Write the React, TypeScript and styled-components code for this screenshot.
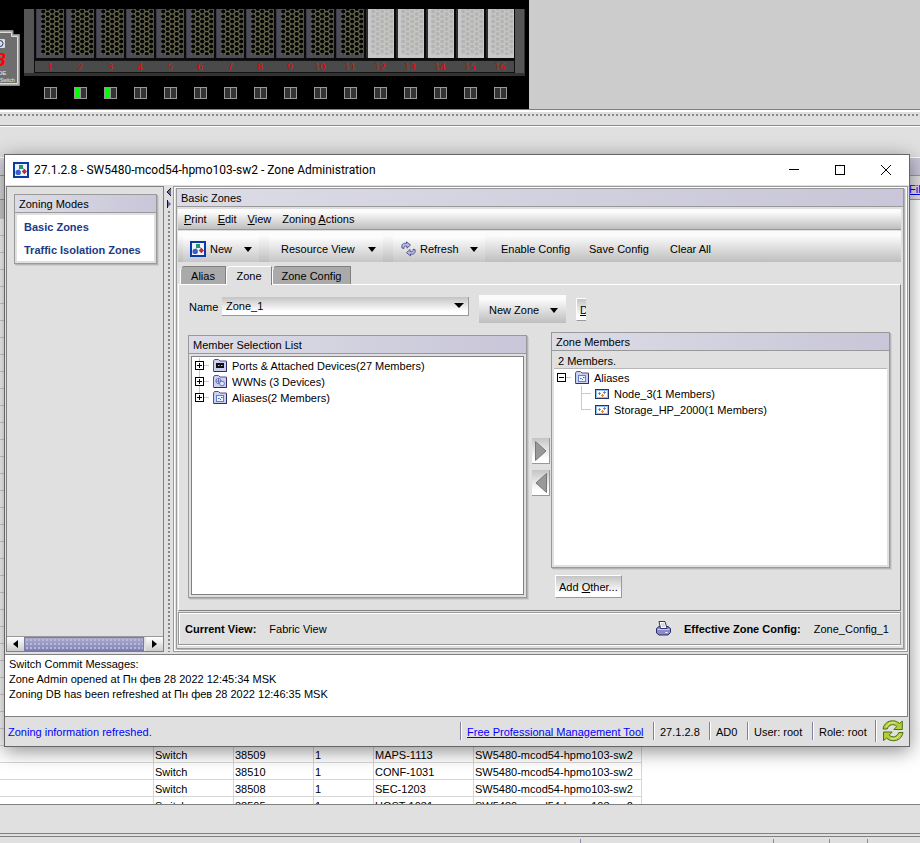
import React from "react";
import styled, { createGlobalStyle, css } from "styled-components";

const GREY = "#e0e0e0";
const LINE = "#999999";
const DARK = "#808080";
const headerFill = "linear-gradient(to right, #dcdce6, #c8c6d8)";
const barFill = "linear-gradient(to bottom, #fbfbfb 15%, #bebebe)";

const Global = createGlobalStyle`
  * { box-sizing: border-box; }
  body { margin: 0; background: ${GREY}; color: #000; font: 11px/16px "Liberation Sans", Arial, sans-serif; overflow: hidden; }
  button, select { font: inherit; color: inherit; margin: 0; padding: 0; border: 0; background: none; border-radius: 0; }
  svg { display: block; flex: none; }
  ul { list-style: none; margin: 0; padding: 0; }
`;

/* ---------- background application ---------- */

const Desktop = styled.div`
  position: relative;
  min-height: 100vh;
  overflow: hidden;
  display: flex;
  flex-direction: column;
`;

const ChassisStrip = styled.div`
  display: flex;
  background: #cccccc;
`;

const Chassis = styled.div`
  display: flex;
  align-items: flex-start;
  background: #000;
  height: 109px;
  padding: 9px 4px 0 0;
`;

const Badge = styled.div`
  width: 24px;
  padding-top: 21px;
`;

const Rack = styled.div`
  width: 501px;
`;

const Frame = styled.div`
  background: #555;
  border-right: 1px solid #333;
  border-bottom: 3px solid #333;
  padding: 0 9px 0 10px;
`;

const Bays = styled.div`
  display: grid;
  grid-template-columns: repeat(16, 30px);
  background: #0a0a0a;
  padding-bottom: 2px;
`;

const Labels = styled.div`
  display: grid;
  grid-template-columns: repeat(16, 30px);
  height: 13px;
  background: #4a4a4a;
  border: 1px solid #111;
  color: #f00;
  font: 9px/12px "DejaVu Sans", sans-serif;
  text-align: center;
`;

const Leds = styled.div`
  display: grid;
  grid-template-columns: repeat(16, 30px);
  justify-items: center;
  padding: 11px 0 0 11px;
`;

const Led = styled.div<{ $on?: boolean }>`
  display: flex;
  gap: 1px;
  padding: 1px;
  background: #999;
  &::before, &::after { content: ""; width: 5px; height: 10px; background: #333; }
  &::before { background: ${(p) => (p.$on ? "#00ff00" : "#333")}; }
`;

const Grip = styled.div`
  height: 17px;
  border-top: 1px solid ${DARK};
  border-bottom: 1px solid #8888a0;
  background: radial-gradient(circle at 1px 1px, #8a8a8a 1px, transparent 1px) 0 4px / 4px 100% repeat-x, ${GREY};
  box-shadow: inset 0 2px #fff, 0 1px #fff;
`;

const Spacer = styled.div`
  height: 31px;
`;

const LogTitle = styled.div`
  height: 19px;
  border-top: 1px solid #fff;
  border-bottom: 1px solid ${LINE};
  background: ${headerFill};
`;

const LogTools = styled.div`
  height: 24px;
  display: flex;
  justify-content: flex-end;
  padding: 5px 0 0;
  border-bottom: 1px solid ${LINE};
  overflow: hidden;
`;

const FilterClip = styled.div`
  width: 11px;
  overflow: hidden;
  white-space: nowrap;
`;

const Link = styled.a`
  color: #0000ff;
  text-decoration: underline;
`;

const LogBody = styled.div`
  background: #fff;
  height: 605px;
  border-bottom: 1px solid ${DARK};
  overflow: hidden;
`;

const LogTable = styled.table`
  width: 642px;
  table-layout: fixed;
  border-collapse: separate;
  border-spacing: 0;
  th, td {
    height: 17px;
    padding: 2px 0 0 1px;
    border-right: 1px solid #d6d6d6;
    border-bottom: 1px solid #d6d6d6;
    line-height: 14px;
    text-align: left;
    font-weight: normal;
    white-space: nowrap;
  }
  th { height: 19px; background: #d2d2d2; }
`;

const PageFooter = styled.div`
  margin-top: 28px;
  height: 10px;
  border-top: 1px solid ${DARK};
  padding-top: 2px;
`;

const FooterCells = styled.div`
  border-top: 1px solid ${DARK};
  display: grid;
  grid-template-columns: 581px 193px 56px 38px 1fr;
  padding-top: 2px;
  span { height: 5px; border-right: 1px solid #8888a8; }
  span:last-child { border: 0; }
`;

/* ---------- window ---------- */

const Window = styled.section`
  position: absolute;
  left: 4px;
  right: 10px;
  top: 154px;
  border: 1px solid #666;
  background: ${GREY};
  box-shadow: 0 4px 18px rgba(0, 0, 0, 0.45);
`;

const TitleBar = styled.header`
  display: flex;
  align-items: center;
  height: 30px;
  padding-left: 8px;
  background: #fff;
  font: 12px/16px Roboto, "Open Sans", sans-serif;
`;

const TitleText = styled.h1`
  flex: 1;
  margin: 0 0 0 5px;
  font: inherit;
  white-space: nowrap;
`;

const WinButton = styled.button`
  width: 46px;
  height: 30px;
  display: grid;
  place-items: center;
`;

const Main = styled.div`
  display: flex;
  padding: 1px 1px 2px;
`;

const SidePane = styled.aside`
  width: 158px;
  display: flex;
  flex-direction: column;
  justify-content: space-between;
  border: 1px solid ${DARK};
  padding-top: 7px;
`;

const Card = styled.section`
  border: 1px solid ${LINE};
  box-shadow: 1px 1px #b4b4b4, 2px 2px #cfcfcf;
`;

const CardTitle = styled.h2`
  margin: 0;
  height: 18px;
  padding-left: 4px;
  font: inherit;
  line-height: 18px;
  background: ${headerFill};
  border-bottom: 1px solid ${LINE};
`;

const ModesCard = styled(Card)`
  margin: 0 6px 0 7px;
`;

const ModeList = styled.nav`
  display: flex;
  flex-direction: column;
  gap: 7px;
  margin: 2px;
  padding: 4px 7px 3px;
  background: #fff;
  a { color: #1b3a86; font-weight: bold; text-decoration: none; white-space: nowrap; }
`;

const HScroll = styled.div`
  display: flex;
  height: 15px;
  border-top: 1px solid ${LINE};
`;

const ScrollButton = styled.button`
  width: 17px;
  display: grid;
  place-items: center;
  background: linear-gradient(#fff, #ccc);
`;

const Thumb = styled.div`
  flex: 1;
  margin-right: 2px;
  border: 1px solid #7a7aa8;
  background:
    radial-gradient(circle, #b8b8dc 1px, transparent 1px) 0 0 / 4px 4px,
    linear-gradient(#a9a9cf, #8585b3);
`;

const Splitter = styled.div`
  width: 9px;
  padding: 2px 0 0 3px;
  display: flex;
  flex-direction: column;
  gap: 3px;
`;

const SplitDots = styled.div`
  flex: 1;
  width: 4px;
  background: radial-gradient(circle at 2px 1px, #888 1px, transparent 1px) 0 0 / 4px 4px;
`;

const Outer = styled.main`
  flex: 1;
  min-width: 0;
  border: 1px solid ${LINE};
  box-shadow: inset 0 0 0 1px #fff;
  padding: 1px 3px 2px 2px;
`;

const Inner = styled(Card)`
  box-shadow: 1px 1px #b4b4b4;
  padding-bottom: 3px;
`;

const MenuBar = styled.nav`
  display: flex;
  gap: 11px;
  height: 21px;
  margin: 2px 2px 0 1px;
  padding: 0 6px;
  background: ${barFill};
  border-bottom: 1px solid ${LINE};
  button { line-height: 20px; }
  u { text-underline-offset: 1px; }
`;

const ToolBar = styled.div`
  display: flex;
  height: 31px;
  margin: 1px 2px 0 1px;
  padding-left: 5px;
  gap: 10px;
  background: ${barFill};
`;

const ToolButton = styled.button<{ $w: number; $pad: number }>`
  display: flex;
  align-items: center;
  width: ${(p) => p.$w}px;
  padding: 5px 7px 0 ${(p) => p.$pad}px;
  gap: 4px;
  white-space: nowrap;
  background: linear-gradient(to bottom, #fcfcfc 20%, #c6c6c6);
  span { flex: 1; text-align: left; }
`;

const FlatButton = styled.button<{ $w: number }>`
  width: ${(p) => p.$w}px;
  padding-top: 5px;
  text-align: left;
  white-space: nowrap;
`;

const FlatGroup = styled.div`
  display: flex;
  padding-left: 6px;
`;

const Tabs = styled.div`
  display: flex;
  align-items: flex-end;
  padding: 4px 0 0 3px;
`;

const Tab = styled.button<{ $on?: boolean; $w: number }>`
  width: ${(p) => p.$w}px;
  height: 18px;
  line-height: 18px;
  border: 1px solid ${DARK};
  border-left-color: #fff;
  border-bottom: 0;
  border-top-left-radius: 5px;
  background: #aaa;
  ${(p) =>
    p.$on &&
    css`
      background: ${GREY};
      border-top-color: #fff;
      height: 19px;
      margin-bottom: -1px;
    `}
`;

const TabPanel = styled.div`
  margin: 0 2px 0 1px;
  padding: 10px 10px 0 9px;
  height: 327px;
  border: 1px solid ${DARK};
  border-top-color: #fff;
  border-left-color: #fff;
`;

const FormRow = styled.div`
  display: flex;
  align-items: flex-start;
  gap: 10px;
`;

const NameField = styled.label`
  display: grid;
  grid-template-columns: 33px 247px;
  align-items: center;
  padding: 2px 0 0 1px;
`;

const SelectBox = styled.div`
  position: relative;
  svg { position: absolute; right: 5px; top: 6px; pointer-events: none; }
`;

const Select = styled.select`
  appearance: none;
  width: 100%;
  height: 19px;
  padding-left: 4px;
  background: linear-gradient(#c4c4c4, #fff 80%);
  border-right: 1px solid ${LINE};
  border-bottom: 1px solid ${LINE};
`;

const NewZone = styled.button`
  display: flex;
  align-items: center;
  gap: 11px;
  width: 87px;
  height: 28px;
  padding: 2px 7px 0 10px;
  white-space: nowrap;
  background: ${barFill};
`;

const PlainButton = styled.button`
  padding: 0 3px;
  height: 23px;
  white-space: nowrap;
  overflow: hidden;
  background: linear-gradient(#c4c4c4, #fff 80%);
  border: 1px solid ${LINE};
  border-top-color: #fff;
  border-left-color: #fff;
`;

const ClippedButton = styled(PlainButton)`
  width: 10px;
  margin-top: 3px;
  border-right: 0;
  text-align: left;
`;

const Columns = styled.div`
  display: grid;
  grid-template-columns: 1fr 24px 1fr;
  margin-top: 9px;
`;

const LeftCard = styled(Card)`
  margin-top: 3px;
  height: 263px;
  display: flex;
  flex-direction: column;
`;

const ListBox = styled.div`
  flex: 1;
  margin: 2px;
  padding: 1px 0 0 3px;
  background: #fff;
  border: 1px solid ${DARK};
`;

const MemberCard = styled(Card)`
  height: 236px;
  display: flex;
  flex-direction: column;
`;

const Count = styled.p`
  margin: 1px 2px 0;
  height: 17px;
  padding-left: 4px;
  line-height: 18px;
  border-bottom: 1px solid #b8b8b8;
`;

const MemberBox = styled.div`
  flex: 1;
  margin: 0 2px 2px;
  padding: 1px 0 0 3px;
  background: #fff;
`;

const Node = styled.li`
  display: flex;
  align-items: center;
  height: 16px;
  white-space: nowrap;
  svg + span { margin-left: 5px; }
`;

const Arrows = styled.div`
  display: flex;
  flex-direction: column;
  align-items: flex-end;
  gap: 6px;
  padding: 106px 1px 0 0;
`;

const ArrowButton = styled.button`
  width: 18px;
  height: 26px;
  display: grid;
  place-items: center;
  background: linear-gradient(#c4c4c4, #fff 80%);
  border-right: 1px solid ${LINE};
  border-bottom: 1px solid ${LINE};
`;

const AddRow = styled.div`
  padding: 7px 0 0 4px;
`;

const ViewBar = styled.div`
  display: flex;
  align-items: center;
  height: 33px;
  margin: 1px 2px 0 1px;
  padding: 0 11px 0 6px;
  border: 1px solid ${LINE};
  box-shadow: inset 1px 1px #fff, 0 1px #fff;
  white-space: nowrap;
  b + span { margin-left: 13px; }
  svg { margin: 0 13px 0 auto; }
`;

const Messages = styled.div`
  height: 63px;
  margin-right: 1px;
  padding: 2px 4px;
  background: #fff;
  border: 1px solid ${DARK};
  border-left: 0;
  line-height: 15px;
  p { margin: 0; }
`;

const StatusBar = styled.footer`
  display: flex;
  align-items: center;
  height: 29px;
  padding: 0 0 2px 3px;
  white-space: nowrap;
`;

const Info = styled.span`
  flex: 1;
  color: #0000ff;
  padding-top: 3px;
`;

const Cell = styled.div<{ $w: number }>`
  width: ${(p) => p.$w}px;
  height: 18px;
  padding: 2px 0 0 6px;
  border-left: 1px solid #7f7fa6;
  box-shadow: inset 1px 0 #fff;
`;

const IconCell = styled(Cell)`
  height: 22px;
  padding-top: 0;
`;

/* ---------- icons ---------- */

const AppIcon = () => (
  <svg width="16" height="16" viewBox="0 0 16 16">
    <rect x="1" y="1" width="14" height="14" fill="#eef3ff" stroke="#0b3aa8" strokeWidth="2" />
    <path d="M7.500 6 5 9M10 6l2 3" stroke="#9aa4b8" />
    <rect x="6" y="3" width="4" height="4" fill="#1c9a6c" />
    <circle cx="5.200" cy="10.400" r="2.700" fill="#3b5fc4" />
    <path d="m11.400 6.800 2.600 2.700-2.600 2.700L8.800 9.500z" fill="#c62a2a" />
  </svg>
);

const Caret = ({ w = 8 }: { w?: number }) => (
  <svg width={w} height="5" viewBox="0 0 8 5" preserveAspectRatio="none">
    <path d="M0 0h8L4 5z" />
  </svg>
);

const RefreshSmall = () => (
  <svg width="15" height="16" viewBox="0 0 15 16" stroke="#3c3c78" strokeWidth=".8" fill="#b7b9ea">
    <path d="M1 7C0 3.500 2.500 1.500 5.500 2.500V.8L9.500 4 6 7.200V5.300C4 4.600 2.800 5.200 3 7.500z" />
    <path d="M14 8.500c1 3.500-1.500 5.500-4.500 4.500v1.900l-4-3.200 3.500-3.200v1.900c2 .7 3.200.1 3-2.100z" />
  </svg>
);

const Expander = ({ open, last }: { open?: boolean; last?: boolean }) => (
  <svg width="18" height="16" viewBox="0 0 18 16" shapeRendering="crispEdges">
    {!open && <path d={last ? "M4.500 0v4" : "M4.500 0v16"} stroke="#c8c8dc" />}
    <path d="M9 7.500h5" stroke="#c8c8dc" />
    <rect x=".5" y="3.500" width="8" height="8" fill="#fff" stroke="#000" />
    <path d={open ? "M2 7.500h5" : "M2 7.500h5M4.500 5v5"} stroke="#000" />
  </svg>
);

const Branch = ({ last }: { last?: boolean }) => (
  <svg width="38" height="16" viewBox="0 0 38 16" shapeRendering="crispEdges">
    <path d={`M24.500 0v${last ? 8 : 16}M24 7.500h10`} stroke="#c8c8dc" fill="none" />
  </svg>
);

const Folder = ({ kind }: { kind: "port" | "wwn" | "alias" }) => (
  <svg width="14" height="14" viewBox="0 0 14 14">
    <path d="M.5 12.500V2l1-1.500h4L7 2h6.500v10.500z" fill="#cfcff0" stroke="#50509a" />
    <path d="M1 12.500h12.500V3" fill="none" stroke="#2f2f66" />
    {kind === "port" && (
      <>
        <rect x="3" y="4" width="8" height="5" fill="#111" />
        <path d="M5 6.500h1.500M8 6.500h1.500" stroke="#ccc" />
      </>
    )}
    {kind === "wwn" && (
      <g fill="#e4e8fa" stroke="#4a5aa8" strokeWidth=".8">
        <circle cx="5.500" cy="6" r="2.600" />
        <circle cx="9" cy="8.500" r="2.400" />
        <path d="M3 6h5M5.500 3.500v5" />
      </g>
    )}
    {kind === "alias" && (
      <>
        <rect x="3.500" y="4.500" width="7" height="6" fill="#eaf3ff" stroke="#4f86d8" />
        <path d="M5 7.500h1.500M8 6.500h1.500M7 8.500h1" stroke="#3c62b0" />
      </>
    )}
  </svg>
);

const AliasIcon = () => (
  <svg width="14" height="11" viewBox="0 0 14 11">
    <rect x=".5" y=".5" width="13" height="9" fill="#fff" stroke="#26346e" />
    <rect x="1.500" y="1.500" width="11" height="7" fill="none" stroke="#8fc0f4" />
    <path d="M3 4.500h3M4.500 3v3M8 3.500h3M9.500 2v3" stroke="#5a6cc0" strokeWidth=".8" />
    <path d="M6 6.500h3M7.500 5v3" stroke="#e88a1a" />
  </svg>
);

const Printer = () => (
  <svg width="15" height="15" viewBox="0 0 15 15">
    <path d="M.5 7.500 3 5.500h9l2.500 2v4L12 14H3L.5 12z" fill="#8c8cc8" stroke="#2c2c66" />
    <path d="M1.500 8.500h12" stroke="#c4c4ec" />
    <path d="M4.500 7.500 3 .5h6l2 7z" fill="#fff" stroke="#33336e" />
    <path d="M5 3h3.500M5.500 5H9" stroke="#9a9ac8" strokeWidth=".8" />
    <path d="M9.500 11.500h2" stroke="#fff" />
  </svg>
);

const RefreshGreen = () => (
  <svg width="22" height="22" viewBox="0 0 22 22" fill="#b4cc3c" stroke="#4c7012" strokeWidth="1">
    <path d="M1 9C2 3.500 6 .8 10.500.8c3 0 5.300 1 6.800 2.700l3-2.300V9.500h-8.500L14.800 6.500C11.500 3.200 6.800 4.500 5.200 9z" />
    <path d="M21 12.500c-1 5.500-5 8.200-9.500 8.200-3 0-5.300-1-6.800-2.700l-3.200 2.500V12h8.700L7.200 15c3.300 3.300 8 2 9.600-2.500z" />
    <path d="M4 7C6 3.500 9.500 2 13.500 3" fill="none" stroke="#e6f08c" />
    <path d="M18 14.500c-2 3.500-5.500 5-9.500 4" fill="none" stroke="#e6f08c" />
  </svg>
);

const Blade = ({ empty }: { empty?: boolean }) => (
  <svg width="30" height="49" viewBox="0 0 30 49">
    <defs>
      <pattern id={empty ? "meshLight" : "meshDark"} x="7" y="0" width="9" height="5" patternUnits="userSpaceOnUse">
        <rect width="9" height="5" fill={empty ? "#c8c8c2" : "#66664c"} />
        <g fill={empty ? "#b4b4b6" : "#050505"}>
          <circle cx="2.200" cy="2.500" r="2.100" />
          <circle cx="6.700" cy="0" r="2.100" />
          <circle cx="6.700" cy="5" r="2.100" />
        </g>
      </pattern>
    </defs>
    <rect width="30" height="49" fill="#0a0a0a" />
    <rect x="2" width="28" height="49" fill={empty ? "#2c2c2c" : "#3c3c44"} />
    <rect x={empty ? 4 : 3} width={empty ? 26 : 27} height="49" fill={empty ? "#c8c8ca" : "#4c4c5a"} />
    <rect x="7" width="22" height="46" rx="1" fill={`url(#${empty ? "meshLight" : "meshDark"})`} />
  </svg>
);

const BadgeArt = () => (
  <svg width="20" height="56" viewBox="0 0 20 56">
    <path d="M-2 .5H13V4.500h6.500v51H-2z" fill="#aaa" stroke="#888" />
    <path d="M-2 2.500h13.500v4h6v47H-2z" fill="#6e6e6e" stroke="#ddd" />
    <rect x="-6" y="9" width="11" height="9" rx="1" fill="#ddd" />
    <circle cx="0" cy="13.500" r="3" fill="none" stroke="#2a3f7a" />
    <g fontFamily="Liberation Sans, Arial, sans-serif">
      <text x="-5" y="36" fontSize="19" fontWeight="bold" fontStyle="italic" fill="#ff0000">8</text>
      <text x="-2" y="45" fontSize="6" fill="#eee">DE</text>
      <text x="0" y="52" fontSize="5" fill="#eee">Switch</text>
    </g>
  </svg>
);

/* ---------- data ---------- */

const slots = Array.from({ length: 16 }, (_, i) => i + 1);
const emptyRows = Array.from({ length: 31 }, (_, i) => i);
const log = [
  ["Switch", "38509", "1", "MAPS-1113", "SW5480-mcod54-hpmo103-sw2"],
  ["Switch", "38510", "1", "CONF-1031", "SW5480-mcod54-hpmo103-sw2"],
  ["Switch", "38508", "1", "SEC-1203", "SW5480-mcod54-hpmo103-sw2"],
  ["Switch", "38505", "1", "HOST-1031", "SW5480-mcod54-hpmo103-sw2"],
];

const Background = () => (
  <>
    <ChassisStrip>
      <Chassis>
        <Badge><BadgeArt /></Badge>
        <Rack>
          <Frame>
            <Bays>{slots.map((n) => <Blade key={n} empty={n > 11} />)}</Bays>
            <Labels>{slots.map((n) => <span key={n}>{n}</span>)}</Labels>
          </Frame>
          <Leds>{slots.map((n) => <Led key={n} $on={n === 2 || n === 3} />)}</Leds>
        </Rack>
      </Chassis>
    </ChassisStrip>
    <Grip />
    <Spacer />
    <LogTitle />
    <LogTools>
      <FilterClip><Link href="#filter">Filter</Link></FilterClip>
    </LogTools>
    <LogBody>
      <LogTable>
        <colgroup>
          <col width="154" /><col width="80" /><col width="80" /><col width="60" /><col width="100" /><col width="168" />
        </colgroup>
        <thead>
          <tr><th /><th /><th /><th /><th /><th /></tr>
        </thead>
        <tbody>
          {emptyRows.map((r) => <tr key={r}><td /><td /><td /><td /><td /><td /></tr>)}
          {log.map((row) => (
            <tr key={row[1]}><td />{row.map((c, i) => <td key={i}>{c}</td>)}</tr>
          ))}
        </tbody>
      </LogTable>
    </LogBody>
    <PageFooter>
      <FooterCells><span /><span /><span /><span /><span /></FooterCells>
    </PageFooter>
  </>
);

export default function App() {
  return (
    <>
      <Global />
      <Desktop>
        <Background />
        <Window>
          <TitleBar>
            <AppIcon />
            <TitleText>27.1.2.8 - SW5480-mcod54-hpmo103-sw2 - Zone Administration</TitleText>
            <WinButton aria-label="Minimize">
              <svg width="10" height="10"><path d="M0 4.500h10" stroke="#000" /></svg>
            </WinButton>
            <WinButton aria-label="Maximize">
              <svg width="10" height="10"><rect x=".5" y=".5" width="9" height="9" fill="none" stroke="#000" /></svg>
            </WinButton>
            <WinButton aria-label="Close">
              <svg width="10" height="10"><path d="m0 0 10 10M10 0 0 10" stroke="#000" /></svg>
            </WinButton>
          </TitleBar>

          <Main>
            <SidePane>
              <ModesCard>
                <CardTitle>Zoning Modes</CardTitle>
                <ModeList>
                  <a href="#basic">Basic Zones</a>
                  <a href="#isolation">Traffic Isolation Zones</a>
                </ModeList>
              </ModesCard>
              <HScroll>
                <ScrollButton aria-label="Scroll left">
                  <svg width="5" height="8"><path d="M5 0v8L0 4z" /></svg>
                </ScrollButton>
                <Thumb />
                <ScrollButton aria-label="Scroll right">
                  <svg width="5" height="8"><path d="M0 0v8l5-4z" /></svg>
                </ScrollButton>
              </HScroll>
            </SidePane>

            <Splitter>
              <svg width="5" height="20">
                <path d="M4 0v8L0 4z" fill="#6a6a9c" />
                <path d="M4 0 0 4l4 4" fill="none" stroke="#111" />
                <path d="M0 12v8l4-4z" fill="#6a6a9c" />
                <path d="M.5 12v8" stroke="#111" />
              </svg>
              <SplitDots />
            </Splitter>

            <Outer>
              <Inner>
                <CardTitle>Basic Zones</CardTitle>
                <MenuBar>
                  <button><u>P</u>rint</button>
                  <button><u>E</u>dit</button>
                  <button><u>V</u>iew</button>
                  <button>Zoning <u>A</u>ctions</button>
                </MenuBar>
                <ToolBar>
                  <ToolButton $w={76} $pad={7}><AppIcon /><span>New</span><Caret /></ToolButton>
                  <ToolButton $w={114} $pad={12}><span>Resource View</span><Caret /></ToolButton>
                  <ToolButton $w={92} $pad={8}><RefreshSmall /><span>Refresh</span><Caret /></ToolButton>
                  <FlatGroup>
                    <FlatButton $w={88}>Enable Config</FlatButton>
                    <FlatButton $w={81}>Save Config</FlatButton>
                    <FlatButton $w={50}>Clear All</FlatButton>
                  </FlatGroup>
                </ToolBar>
                <Tabs role="tablist">
                  <Tab role="tab" $w={46}>Alias</Tab>
                  <Tab role="tab" aria-selected $on $w={46}>Zone</Tab>
                  <Tab role="tab" $w={79}>Zone Config</Tab>
                </Tabs>
                <TabPanel>
                  <FormRow>
                    <NameField>
                      Name
                      <SelectBox>
                        <Select defaultValue="Zone_1"><option>Zone_1</option></Select>
                        <Caret w={10} />
                      </SelectBox>
                    </NameField>
                    <NewZone>New Zone<Caret /></NewZone>
                    <ClippedButton aria-label="Delete"><u>D</u></ClippedButton>
                  </FormRow>
                  <Columns>
                    <LeftCard>
                      <CardTitle>Member Selection List</CardTitle>
                      <ListBox>
                        <ul>
                          <Node><Expander /><Folder kind="port" /><span>Ports &amp; Attached Devices(27 Members)</span></Node>
                          <Node><Expander /><Folder kind="wwn" /><span>WWNs (3 Devices)</span></Node>
                          <Node><Expander last /><Folder kind="alias" /><span>Aliases(2 Members)</span></Node>
                        </ul>
                      </ListBox>
                    </LeftCard>
                    <Arrows>
                      <ArrowButton aria-label="Add member">
                        <svg width="12" height="20"><path d="M.5.5v19L11 10z" fill="#999" stroke="#777" /></svg>
                      </ArrowButton>
                      <ArrowButton aria-label="Remove member">
                        <svg width="12" height="20"><path d="M11.500.5v19L1 10z" fill="#999" stroke="#777" /></svg>
                      </ArrowButton>
                    </Arrows>
                    <div>
                      <MemberCard>
                        <CardTitle>Zone Members</CardTitle>
                        <Count>2 Members.</Count>
                        <MemberBox>
                          <ul>
                            <Node><Expander open /><Folder kind="alias" /><span>Aliases</span></Node>
                            <Node><Branch /><AliasIcon /><span>Node_3(1 Members)</span></Node>
                            <Node><Branch last /><AliasIcon /><span>Storage_HP_2000(1 Members)</span></Node>
                          </ul>
                        </MemberBox>
                      </MemberCard>
                      <AddRow><PlainButton>Add <u>O</u>ther...</PlainButton></AddRow>
                    </div>
                  </Columns>
                </TabPanel>
                <ViewBar>
                  <b>Current View:</b><span>Fabric View</span>
                  <Printer />
                  <b>Effective Zone Config:</b><span>Zone_Config_1</span>
                </ViewBar>
              </Inner>
            </Outer>
          </Main>

          <Messages>
            <p>Switch Commit Messages:</p>
            <p>Zone Admin opened at Пн фев 28 2022 12:45:34 MSK</p>
            <p>Zoning DB has been refreshed at Пн фев 28 2022 12:46:35 MSK</p>
          </Messages>
          <StatusBar>
            <Info>Zoning information refreshed.</Info>
            <Cell $w={193}><Link href="#tool">Free Professional Management Tool</Link></Cell>
            <Cell $w={56}>27.1.2.8</Cell>
            <Cell $w={38}>AD0</Cell>
            <Cell $w={65}>User: root</Cell>
            <Cell $w={63}>Role: root</Cell>
            <IconCell $w={34}><RefreshGreen /></IconCell>
          </StatusBar>
        </Window>
      </Desktop>
    </>
  );
}
